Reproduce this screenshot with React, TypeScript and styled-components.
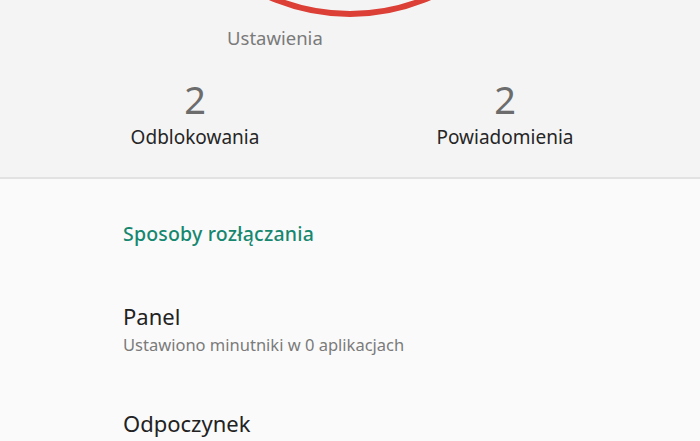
import React from 'react';
import styled, {createGlobalStyle} from "styled-components";

const GlobalStyle = createGlobalStyle`
    html, body {
        margin: 0;
        padding: 0;
        background: #fafafa;
        font-family: "Noto Sans", "Open Sans", sans-serif;
    }
`

const Page = styled.div`
    width: 700px;
    height: 441px;
    overflow: hidden;
    display: flex;
    flex-direction: column;
`

const Summary = styled.section`
    background: #f4f4f4;
    border-bottom: 2px solid #e2e2e2;
    display: flex;
    flex-direction: column;
    height: 179px;
    box-sizing: border-box;
`

const ChartArea = styled.div`
    position: relative;
    height: 60px;
`

const Ring = styled.svg`
    position: absolute;
    top: 0;
    left: 0;
`

const AppLabel = styled.span`
    position: absolute;
    left: 227px;
    top: 25px;
    font-size: 18.5px;
    color: #7a7a7a;
`

const Stats = styled.div`
    display: grid;
    grid-template-columns: 1fr 1fr;
    padding: 16px 40px 0;
`

const Stat = styled.div`
    display: flex;
    flex-direction: column;
    align-items: center;
`

const StatValue = styled.span`
    font-size: 38px;
    font-weight: 400;
    color: #6c6c6c;
    line-height: 46px;
`

const StatLabel = styled.span`
    font-size: 19px;
    color: #262626;
    line-height: 31px;
`

const List = styled.section`
    display: flex;
    flex-direction: column;
    padding-left: 123px;
`

const SectionTitle = styled.h2`
    margin: 41px 0 0;
    font-size: 19.5px;
    font-weight: 500;
    letter-spacing: 0.2px;
    color: #16876f;
    line-height: 28px;
`

const Item = styled.div<{ first?: boolean }>`
    display: flex;
    flex-direction: column;
    margin-top: ${props => props.first ? '53px' : '52px'};
`

const ItemTitle = styled.span`
    font-size: 22px;
    color: #222;
    line-height: 30px;
`

const ItemSub = styled.span`
    font-size: 16.5px;
    color: #7b7b7b;
    line-height: 22px;
    margin-top: 3px;
`

const stats = [
    {value: 2, label: 'Odblokowania'},
    {value: 2, label: 'Powiadomienia'},
]

const items = [
    {title: 'Panel', sub: 'Ustawiono minutniki w 0 aplikacjach'},
    {title: 'Odpoczynek', sub: ''},
]

function App() {
    return (
        <Page>
            <GlobalStyle/>
            <Summary>
                <ChartArea>
                    <Ring width="700" height="60" viewBox="0 0 700 60">
                        <circle cx="350" cy="-185" r="199" fill="none" stroke="#db3f36" strokeWidth="6"/>
                    </Ring>
                    <AppLabel>Ustawienia</AppLabel>
                </ChartArea>
                <Stats>
                    {stats.map(({value, label}) => (
                        <Stat key={label}>
                            <StatValue>{value}</StatValue>
                            <StatLabel>{label}</StatLabel>
                        </Stat>
                    ))}
                </Stats>
            </Summary>
            <List>
                <SectionTitle>Sposoby rozłączania</SectionTitle>
                {items.map(({title, sub}, i) => (
                    <Item key={title} first={i === 0}>
                        <ItemTitle>{title}</ItemTitle>
                        {sub && <ItemSub>{sub}</ItemSub>}
                    </Item>
                ))}
            </List>
        </Page>
    );
}

export default App;
